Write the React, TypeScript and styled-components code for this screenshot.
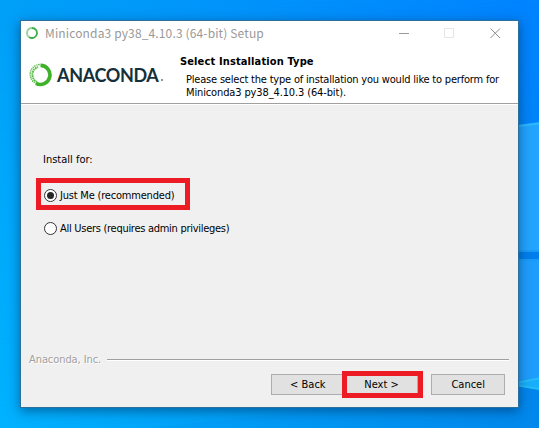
import React from "react";
import styled, { createGlobalStyle } from "styled-components";

const GlobalStyle = createGlobalStyle`
  * { box-sizing: border-box; }
  body { margin: 0; overflow: hidden; }
`;

const Desktop = styled.div`
  position: relative;
  width: 539px;
  height: 428px;
  padding: 20px;
  overflow: hidden;
  background: #0096f8;
  font: 11px/13px "DejaVu Sans Condensed", "DejaVu Sans", sans-serif;
  font-stretch: condensed;
  color: #000;
`;

const WallpaperSvg = styled.svg`
  position: absolute;
  inset: 0;
`;

const Window = styled.main`
  position: relative;
  display: flex;
  flex-direction: column;
  width: 499px;
  height: 388px;
  border: 1px solid #2b6f9c;
  background: #f0f0f0;
  box-shadow: 0 3px 11px rgba(0, 30, 70, 0.5);
`;

const TitleBar = styled.header`
  display: flex;
  align-items: center;
  height: 24px;
  padding: 0 17px 0 5px;
  background: #fff;
`;

const Title = styled.span`
  flex: 1;
  margin-left: 7px;
  white-space: nowrap;
  font: 12px/20px "Noto Sans CJK TC", "Noto Sans", sans-serif;
  letter-spacing: 0.14px;
  color: #999;
`;

const Controls = styled.div`
  display: grid;
  grid-template-columns: 45px 46px 11px;
`;

const Banner = styled.section`
  display: flex;
  height: 60px;
  padding: 9px 0 0 8px;
  background: #fff;
  border-bottom: 1px solid #fff;
  box-shadow: inset 0 -1px #a0a0a0;
`;

const Brand = styled.div`
  display: flex;
  width: 151px;
  height: 41px;
  align-items: center;
`;

const BrandName = styled.span`
  margin-left: 5px;
  font: 700 18px/20px Lato, sans-serif;
  letter-spacing: -0.35px;
  color: #14303a;
`;

const BrandDot = styled.span`
  width: 2px;
  height: 2px;
  margin: 11px 0 0 2px;
  background: #8b989c;
`;

const Heading = styled.h1`
  margin: 1px 0 0;
  font-size: 11px;
  line-height: 13px;
  font-weight: 700;
  letter-spacing: 0.13px;
  white-space: nowrap;
`;

const Description = styled.p`
  margin: 5px 0 0 6px;
`;

const TextLine = styled.span<{ $spacing?: number }>`
  display: block;
  white-space: nowrap;
  letter-spacing: ${(p) => p.$spacing ?? 0}px;
`;

const Body = styled.section`
  flex: 1;
  display: flex;
  flex-direction: column;
  align-items: flex-start;
  padding: 48px 0 0 15px;
`;

const Prompt = styled.div`
  margin: 0 0 12px 7px;
`;

const Option = styled.label<{ $marked?: boolean }>`
  display: flex;
  align-items: center;
  gap: 3px;
  height: 32px;
  width: ${(p) => (p.$marked ? "154px" : "auto")};
  padding: 3px 0 0 3px;
  border: 5px solid ${(p) => (p.$marked ? "#ed1c24" : "transparent")};
  & + & { margin-top: 1px; }
`;

const Radio = styled.span<{ $checked?: boolean }>`
  display: grid;
  place-items: center;
  width: 13px;
  height: 13px;
  border: 1px solid #333;
  border-radius: 50%;
  background: #fff;
  &::after {
    content: "";
    width: 7px;
    height: 7px;
    border-radius: 50%;
    background: ${(p) => (p.$checked ? "#262626" : "transparent")};
  }
`;

const Vendor = styled.div`
  display: flex;
  align-items: center;
  gap: 6px;
  height: 14px;
  margin: 0 9px 0 8px;
  color: #a0a0a0;
  text-shadow: 1px 1px #fff;
`;

const Rule = styled.div`
  flex: 1;
  height: 2px;
  margin-top: 2px;
  background: linear-gradient(#a0a0a0 50%, #fff 50%);
`;

const Footer = styled.footer`
  display: flex;
  height: 41px;
  padding: 8px 13px 0 250px;
`;

const Button = styled.button<{ $marked?: boolean; $gap?: number }>`
  position: relative;
  width: 74px;
  height: 21px;
  margin-left: ${(p) => p.$gap ?? 0}px;
  padding: 0;
  border: 1px solid #adadad;
  border-radius: 0;
  background: #e1e1e1;
  color: #000;
  font: inherit;
  ${(p) =>
    p.$marked &&
    `&::after {
      content: "";
      position: absolute;
      inset: -4px -6px -4px -4px;
      border: 5px solid #ed1c24;
    }`}
`;

function Wallpaper() {
  return (
    <WallpaperSvg width="539" height="428" viewBox="0 0 539 428">
      <defs>
        <linearGradient id="top" x1="0" x2="1">
          <stop offset="0" stopColor="#00a0f8" />
          <stop offset="0.5" stopColor="#0092fb" />
          <stop offset="1" stopColor="#0083ff" />
        </linearGradient>
        <linearGradient id="bottom" x1="0" x2="1">
          <stop offset="0" stopColor="#00b2ff" />
          <stop offset="0.5" stopColor="#009df6" />
          <stop offset="1" stopColor="#0085ea" />
        </linearGradient>
        <linearGradient id="fade" x1="0" y1="0" x2="0" y2="1">
          <stop offset="0" stopColor="#fff" stopOpacity="0" />
          <stop offset="1" stopColor="#fff" />
        </linearGradient>
        <mask id="lower">
          <rect width="539" height="428" fill="url(#fade)" />
        </mask>
      </defs>
      <rect width="539" height="428" fill="url(#top)" />
      <rect width="539" height="428" fill="url(#bottom)" mask="url(#lower)" />
      <path d="M500 127.500L539 122V251H500Z" fill="#22a4ff" />
      <path d="M500 260H539V378L500 386Z" fill="#1e9dfd" />
      <path d="M500 128.500L539 123.500" stroke="#2cb9ff" strokeWidth="2" />
      <path d="M500 251H539M500 260H539" stroke="#189cf8" strokeWidth="2" />
      <rect x="500" y="252" width="39" height="7" fill="#007eed" />
      <path d="M510 383L539 379V389L510 384Z" fill="#19aefb" />
      <path d="M510 384L539 378.500M510 384L539 389" stroke="#24bdf9" strokeWidth="2" />
      <path d="M150 428L330 408L539 400V428Z" fill="#008ff0" opacity="0.25" />
    </WallpaperSvg>
  );
}

function WindowIcon() {
  return (
    <svg width="12" height="12" viewBox="0 0 12 12" fill="none" stroke="#3fb049" strokeWidth="1.8">
      <path d="M6 1A5 5 0 1 1 3 10" />
      <path d="M3 10A5 5 0 0 1 6 1" opacity="0.55" />
    </svg>
  );
}

function AnacondaRing() {
  return (
    <svg width="23" height="24" viewBox="0 0 23 24" fill="none" stroke="#3eb02a">
      <path d="M11.500 2.400A9.500 9.500 0 1 1 7 20.300" strokeWidth="3.600" />
      <path d="M8 20.800A9.900 9.900 0 0 1 11 1.500" strokeWidth="1.500" strokeDasharray="1.600 .900 1.100 .700" opacity=".85" />
      <path d="M8 19A8.100 8.100 0 0 1 9 4" strokeWidth="1.900" strokeDasharray="1.400 .600 2 .500" opacity=".85" />
    </svg>
  );
}

export default function App() {
  return (
    <>
      <GlobalStyle />
      <Desktop>
        <Wallpaper />
        <Window>
          <TitleBar>
            <WindowIcon />
            <Title>Miniconda3 py38_4.10.3 (64-bit) Setup</Title>
            <Controls>
              <svg width="10" height="11" stroke="#999"><path d="M0 5.500H10" /></svg>
              <svg width="10" height="11" stroke="#e6e6e6" fill="none"><path d="M.5 .5H9.500V9.500H.5Z" /></svg>
              <svg width="11" height="11" stroke="#8c8c8c"><path d="M.5 .5L10 10M10 .5L.5 10" /></svg>
            </Controls>
          </TitleBar>
          <Banner>
            <Brand>
              <AnacondaRing />
              <BrandName>ANACONDA</BrandName>
              <BrandDot />
            </Brand>
            <div>
              <Heading>Select Installation Type</Heading>
              <Description>
                <TextLine $spacing={-0.195}>Please select the type of installation you would like to perform for</TextLine>
                <TextLine $spacing={-0.13}>Miniconda3 py38_4.10.3 (64-bit).</TextLine>
              </Description>
            </div>
          </Banner>
          <Body>
            <Prompt>Install for:</Prompt>
            <Option $marked>
              <Radio $checked />
              <TextLine $spacing={-0.2}>Just Me (recommended)</TextLine>
            </Option>
            <Option>
              <Radio />
              <TextLine $spacing={-0.28}>All Users (requires admin privileges)</TextLine>
            </Option>
          </Body>
          <Vendor>
            <TextLine $spacing={-0.08}>Anaconda, Inc.</TextLine>
            <Rule />
          </Vendor>
          <Footer>
            <Button>&lt; Back</Button>
            <Button $marked>Next &gt;</Button>
            <Button $gap={13}>Cancel</Button>
          </Footer>
        </Window>
      </Desktop>
    </>
  );
}
